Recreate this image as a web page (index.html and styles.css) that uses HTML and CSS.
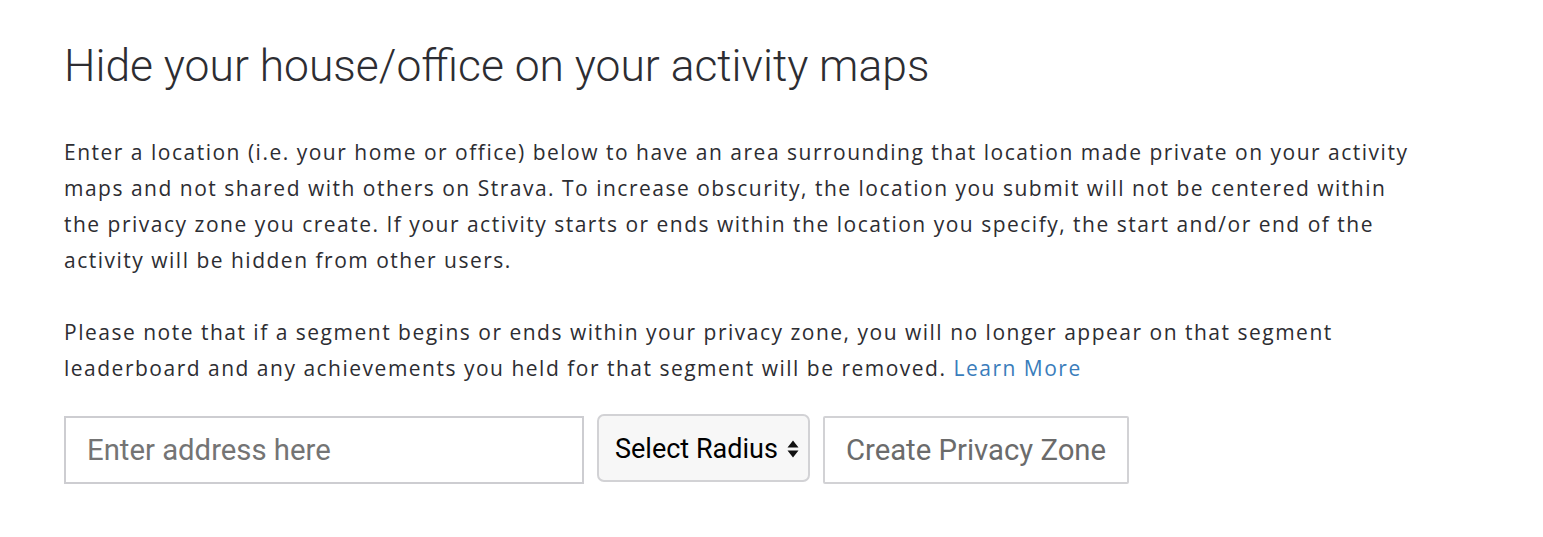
FILE: index.html
```html
<!DOCTYPE html>
<html lang="en">
<head>
    <meta charset="UTF-8">
    <title>Privacy Zones</title>
    <link rel="stylesheet" href="styles.css">
</head>
<body>
<div class="privacy-container">
    <h1>Hide your house/office on your activity maps</h1>

    <p>Enter a location (i.e. your home or office) below to have an area surrounding that location made private on your activity maps and not shared with others on Strava. To increase obscurity, the location you submit will not be centered within the privacy zone you create. If your activity starts or ends within the location you specify, the start and/or end of the activity will be hidden from other users.</p>

    <p>Please note that if a segment begins or ends within your privacy zone, you will no longer appear on that segment leaderboard and any achievements you held for that segment will be removed. <a href="#">Learn More</a></p>

    <form class="zone-form">
        <input type="text" class="address" placeholder="Enter address here">
        <div class="radius-select">
            <span>Select Radius</span>
            <svg width="12" height="20" viewBox="0 0 12 20"><path d="M6 1.5 L11.5 8.5 H0.5 Z M6 18.5 L11.5 11.5 H0.5 Z" fill="#111"/></svg>
        </div>
        <button type="button" class="create-btn">Create Privacy Zone</button>
    </form>
</div>
</body>
</html>
```

FILE: styles.css
```css
body {
    margin: 0;
    background: #fff;
    color: #333;
}

.privacy-container {
    padding: 38px 64px 0;
    max-width: 1350px;
}

.privacy-container h1 {
    font-family: Roboto, "Liberation Sans", sans-serif;
    font-weight: 300;
    font-size: 44.4px;
    line-height: 56px;
    color: #2d2d32;
    margin: 0 0 40px;
}

.privacy-container p {
    font-family: "Open Sans", "Liberation Sans", sans-serif;
    font-size: 21px;
    line-height: 36px;
    color: #2d2d32;
    margin: 0 0 36px;
    letter-spacing: 1.5px;
}

.privacy-container a {
    color: #3a7dbb;
    text-decoration: none;
}

.zone-form {
    display: flex;
    align-items: flex-start;
    gap: 14px;
    margin-top: -6px;
}

.address {
    width: 520px;
    height: 68px;
    box-sizing: border-box;
    border: 2px solid #cdcdd1;
    padding: 0 21px;
    font-family: Roboto, "Liberation Sans", sans-serif;
    font-size: 29.3px;
    color: #333;
    outline: none;
}

.address::placeholder {
    color: #747474;
}

.radius-select {
    width: 213px;
    height: 68px;
    box-sizing: border-box;
    margin-top: -2px;
    margin-left: -1px;
    border: 2px solid #d2d2d5;
    border-radius: 7px;
    background: #f7f7f7;
    display: flex;
    align-items: center;
    gap: 9px;
    padding: 2px 6px 0 16px;
    font-family: Roboto, "Liberation Sans", sans-serif;
    font-size: 27px;
    color: #000;
}

.create-btn {
    width: 306px;
    height: 68px;
    box-sizing: border-box;
    margin-left: -1px;
    border: 2px solid #d2d2d5;
    border-radius: 2px;
    background: #fff;
    font-family: Roboto, "Liberation Sans", sans-serif;
    font-size: 29.3px;
    color: #6b6b6b;
    cursor: pointer;
}
```
